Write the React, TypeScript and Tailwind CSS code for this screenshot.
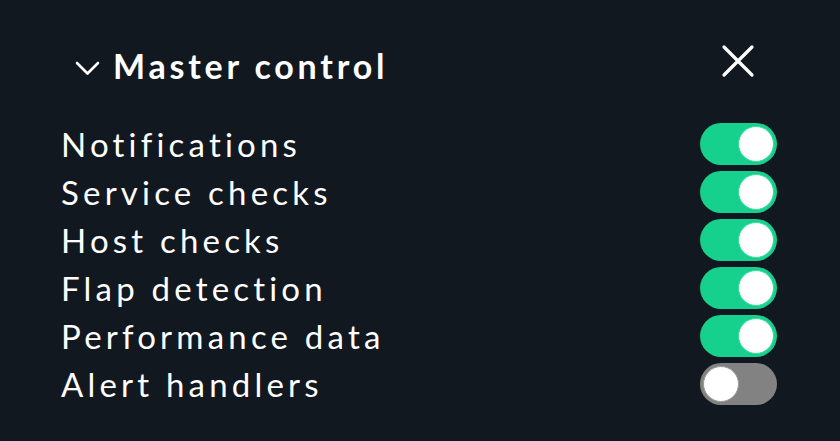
import { useState } from 'react';

const items = [
    { label: 'Notifications', on: true },
    { label: 'Service checks', on: true },
    { label: 'Host checks', on: true },
    { label: 'Flap detection', on: true },
    { label: 'Performance data', on: true },
    { label: 'Alert handlers', on: false },
];

function Toggle({ on, onClick }: { on: boolean; onClick: () => void }) {
    return (
        <button
            onClick={onClick}
            className={`flex h-[42px] w-[77px] items-center rounded-full px-[3px] ${
                on ? 'justify-end bg-[#15d18d]' : 'justify-start bg-[#828282]'
            }`}
        >
            <span
                className={`h-[36px] w-[36px] rounded-full bg-white border-[1.5px] ${
                    on ? 'border-[#3ad9a0]' : 'border-[#9a9a9a]'
                }`}
            />
        </button>
    );
}

export default function App() {
    const [state, setState] = useState(items.map((i) => i.on));

    return (
        <div
            className="w-[840px] h-[441px] bg-[#121820] text-white pl-[61px] pr-[63px] pt-[38px]"
            style={{ fontFamily: 'Lato, "Noto Sans", sans-serif' }}
        >
            {/* Header */}
            <div className="flex items-center justify-between h-[56px]">
                <div className="flex items-center gap-[13px] pl-[14px]">
                    <svg width="25" height="24" viewBox="0 0 25 24" fill="none" className="mt-[4px]">
                        <path d="M2 7l10.5 10.5L23 7" stroke="white" strokeWidth="2.6" strokeLinecap="round" strokeLinejoin="round" />
                    </svg>
                    <span className="text-[34px] font-bold tracking-[3.8px] leading-none">Master control</span>
                </div>
                <svg width="34" height="34" viewBox="0 0 34 34" fill="none" className="mr-[22px] -mt-[10px]">
                    <path d="M3 3l28 28M31 3L3 31" stroke="white" strokeWidth="3.2" strokeLinecap="round" />
                </svg>
            </div>

            {/* Rows */}
            <div className="flex flex-col gap-[6px] mt-[29px]">
                {items.map((item, i) => (
                    <div key={item.label} className="flex items-center justify-between h-[42px]">
                        <span className="text-[33px] tracking-[4.2px] leading-none">{item.label}</span>
                        <Toggle
                            on={state[i]}
                            onClick={() => setState(state.map((s, j) => (j === i ? !s : s)))}
                        />
                    </div>
                ))}
            </div>
        </div>
    );
}
